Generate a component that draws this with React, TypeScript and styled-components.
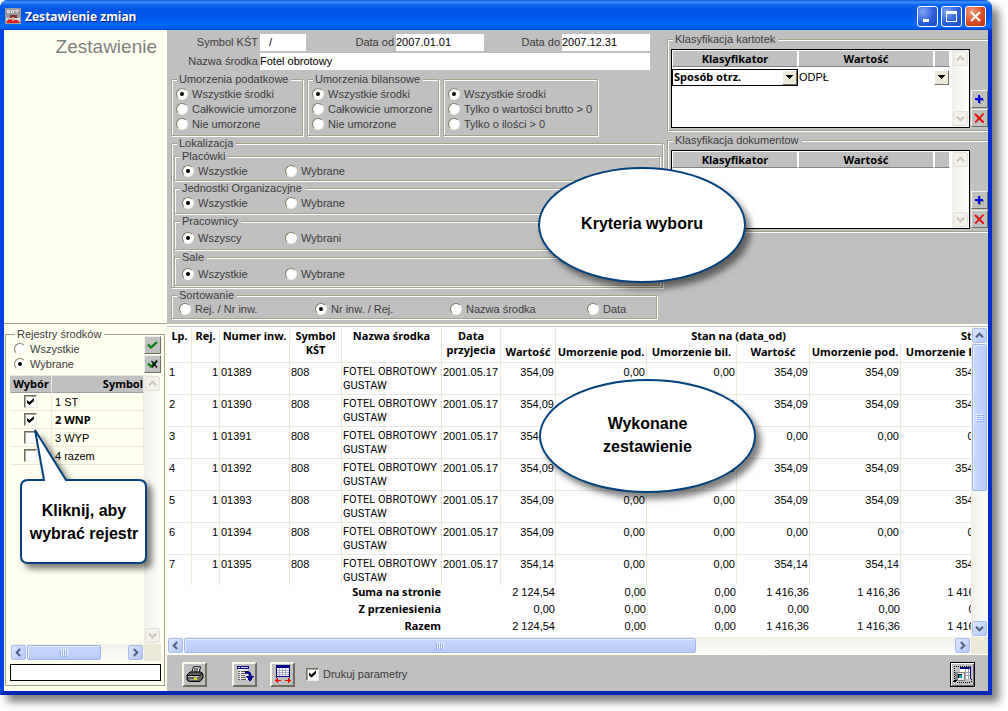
import React from "react";
import styled, { createGlobalStyle, css } from "styled-components";

const sans = '"Liberation Sans", Arial, sans-serif';
const strong = '"Noto Sans", Tahoma, sans-serif';

const face = "#c0c0c0";
const cream = "#ffffef";
const edge = "#a5a28c";
const grid = "#ece9d8";
const ink = "#3c3c3c";

const GlobalStyle = createGlobalStyle`
  *, *::before, *::after { box-sizing: border-box; }
  body { margin: 0; background: #fff; font: 11px/14px ${sans}; color: #000; overflow: hidden; }
  button, input, select { font: inherit; color: inherit; margin: 0; padding: 0; border-radius: 0; }
  fieldset { margin: 0; padding: 0; min-width: 0; }
`;

/* ---------- window frame ---------- */

const Window = styled.main`
  position: relative;
  display: flex;
  flex-direction: column;
  min-height: calc(100vh - 16px);
  margin: 0 16px 16px 0;
  border: 4px solid #0042e0;
  border-top: 0;
  border-right-color: #0030c8;
  border-bottom-color: #0026b4;
  border-radius: 8px 8px 0 0;
  box-shadow: 7px 7px 9px rgba(0, 0, 0, 0.5);
`;

const TitleBar = styled.header`
  display: flex;
  align-items: center;
  gap: 3px;
  height: 30px;
  margin: 0 -4px;
  padding: 3px 6px 0 5px;
  border-radius: 8px 8px 0 0;
  background: linear-gradient(#0a50d8 0, #3a93ff 2px, #0a62ee 5px, #0054e3 10px, #0058ee 18px, #0068ff 25px, #0060f4 28px, #003dca 30px);
`;

const Title = styled.h1`
  flex: 1;
  margin: 0;
  font: bold 12px/16px ${strong};
  color: #fff;
  text-shadow: 1px 1px 0 #0a1e82;
`;

const CaptionButton = styled.button<{ $close?: boolean }>`
  display: grid;
  place-items: center;
  width: 21px;
  height: 21px;
  border: 1px solid #fff;
  border-radius: 3px;
  background: ${(p) =>
    p.$close
      ? "radial-gradient(circle at 30% 25%, #f0a080, #e0502c 50%, #b8300c)"
      : "radial-gradient(circle at 25% 25%, #7fa4f4, #2d5fdc 55%, #1c48c0)"};
`;

const Body = styled.div`
  flex: 1;
  display: grid;
  grid-template-columns: 163px minmax(0, 1fr);
  grid-template-rows: 294px minmax(0, 1fr);
`;

const SideTop = styled.div`
  background: ${cream};
  border-bottom: 1px solid ${edge};
  padding: 6px 10px;
  text-align: right;
`;

const Heading = styled.h2`
  margin: 0;
  font: 19px/22px ${sans};
  color: #808080;
`;

const SideBottom = styled.aside`
  display: flex;
  background: ${cream};
  padding: 4px 2px 5px 1px;
`;

/* ---------- groups, radios, fields ---------- */

const Group = styled.fieldset<{ $h?: number }>`
  border: 1px solid ${edge};
  box-shadow: 1px 1px 0 #fff, inset 1px 1px 0 #fff;
  ${(p) => p.$h && css`height: ${p.$h}px;`}
`;

const SortGroup = styled(Group)`
  margin-right: 6px;
`;

const Legend = styled.legend<{ $bg?: string }>`
  margin-left: 5px;
  padding: 0 3px 0 2px;
  height: 13px;
  line-height: 13px;
  color: ${ink};
  background: ${(p) => p.$bg ?? face};
`;

const RadioLabel = styled.label<{ $w?: number }>`
  display: flex;
  align-items: center;
  gap: 4px;
  height: 15px;
  color: ${ink};
  white-space: nowrap;
  ${(p) => p.$w && css`width: ${p.$w}px;`}
`;

const RadioInput = styled.input.attrs({ type: "radio" })`
  appearance: none;
  flex: none;
  display: grid;
  place-items: center;
  width: 12px;
  height: 12px;
  border-radius: 50%;
  border: 1px solid;
  border-color: #807c68 #f4f2e6 #f4f2e6 #807c68;
  background: #fff;
  &:checked::before {
    content: "";
    width: 4px;
    height: 4px;
    border-radius: 50%;
    background: #000;
  }
`;

const CheckInput = styled.input.attrs({ type: "checkbox" })`
  appearance: none;
  flex: none;
  display: grid;
  place-items: center;
  width: 13px;
  height: 13px;
  border: 1px solid;
  border-color: #716f64 #f1efe2 #f1efe2 #716f64;
  box-shadow: inset 1px 1px 0 #aca899;
  background: #fff;
  &:checked::before {
    content: "";
    width: 7px;
    height: 7px;
    background: #000;
    clip-path: polygon(0 28%, 35% 58%, 100% 0, 100% 42%, 35% 100%, 0 70%);
  }
`;

const RadioColumn = styled.div<{ $untitled?: boolean }>`
  padding: ${(p) => (p.$untitled ? 6 : 0)}px 0 0 4px;
`;

const RadioRow = styled.div<{ $h: number }>`
  display: flex;
  align-items: center;
  padding-left: 7px;
  height: ${(p) => p.$h}px;
`;

const Criteria = styled.section`
  display: grid;
  grid-template-columns: minmax(0, 1fr) 321px;
  background: ${face};
  overflow: hidden;
`;

const CriteriaMain = styled.div`
  padding: 4px 4px 0 4px;
`;

const FieldRow = styled.div`
  display: grid;
  grid-template-columns: 89px 46px 90px 88px 78px 88px;
  height: 19px;
  align-items: start;
`;

const FieldLabel = styled.label`
  padding-right: 2px;
  text-align: right;
  line-height: 16px;
  color: ${ink};
  white-space: nowrap;
`;

const Field = styled.input<{ $wide?: boolean; $indent?: boolean }>`
  width: 100%;
  height: 17px;
  border: 0;
  padding-left: ${(p) => (p.$indent ? 9 : 0)}px;
  padding-bottom: 2px;
  background: #fff;
  ${(p) => p.$wide && css`grid-column: span 5;`}
`;

const GroupRow = styled.div`
  display: grid;
  grid-template-columns: 132px 132px 155px;
  align-items: end;
  gap: 4px;
  height: 64px;
`;

const Nested = styled.div`
  display: flex;
  flex-direction: column;
  gap: 1px;
  padding: 0 2px;
`;

const Stack = styled.div`
  display: flex;
  flex-direction: column;
  gap: 1px;
`;

/* ---------- classification grids ---------- */

const CriteriaSide = styled.div`
  display: flex;
  flex-direction: column;
  gap: 3px;
  padding-top: 3px;
`;

const ClassGroup = styled(Group)`
  border-right: 0;
  height: 98px;
`;

const ClassRow = styled.div`
  display: grid;
  grid-template-columns: minmax(0, 1fr) 17px;
  align-items: end;
  gap: 1px;
  padding: 3px 0 0 3px;
`;

const ClassBox = styled.div`
  display: flex;
  justify-content: space-between;
  height: 79px;
  border: 1px solid #000;
  background: #fff;
`;

const ClassTable = styled.table`
  width: 278px;
  height: 36px;
  table-layout: fixed;
  border-collapse: separate;
  border-spacing: 0;
  th {
    height: 17px;
    padding: 0;
    font: bold 11px/14px ${strong};
    background: ${face};
    border: 1px solid;
    border-color: #fff #fff #808080 #fff;
  }
  td {
    padding: 1px 0 0;
    height: 18px;
  }
`;

const Col = styled.col<{ $w?: number }>`
  ${(p) => p.$w && css`width: ${p.$w}px;`}
`;

const SelectWrap = styled.div<{ $framed?: boolean }>`
  display: flex;
  align-items: center;
  height: 17px;
  border: 1px solid ${(p) => (p.$framed ? "#000" : "transparent")};
  font-family: ${(p) => (p.$framed ? strong : sans)};
  font-weight: ${(p) => (p.$framed ? "bold" : "normal")};
  ${(p) => !p.$framed && css`border-left-width: 0;`}
`;

const Select = styled.select`
  appearance: none;
  flex: 1;
  min-width: 0;
  height: 15px;
  padding-left: 1px;
  border: 0;
  background: transparent;
`;

const Arrow = styled.span`
  display: grid;
  place-items: center;
  width: 15px;
  height: 15px;
  background: ${grid};
  border: 1px solid;
  border-color: #fff #716f64 #716f64 #fff;
  pointer-events: none;
`;

const SmallButtons = styled.div`
  display: flex;
  flex-direction: column;
  gap: 1px;
  padding-bottom: 1px;
`;

const SmallButton = styled.button`
  display: grid;
  place-items: center;
  width: 17px;
  height: 18px;
  background: ${face};
  border: 1px solid;
  border-color: #f4f2e6 #716f64 #716f64 #f4f2e6;
`;

/* ---------- scroll bars ---------- */

const Bar = styled.div<{ $vertical?: boolean }>`
  display: flex;
  flex-direction: ${(p) => (p.$vertical ? "column" : "row")};
  flex: none;
  gap: 1px;
  ${(p) => (p.$vertical ? "width: 17px;" : "height: 17px;")}
  padding: 1px;
  background: linear-gradient(${(p) => (p.$vertical ? "to right" : "to bottom")}, #f0efe8, #fefefb);
`;

const BarButton = styled.button<{ $off?: boolean }>`
  display: grid;
  place-items: center;
  flex: none;
  width: 15px;
  height: 15px;
  border: 1px solid ${(p) => (p.$off ? "#e4e2d6" : "#a8bdee")};
  border-radius: 2px;
  color: ${(p) => (p.$off ? "#c8c6ba" : "#4d6185")};
  background: ${(p) => (p.$off ? "#f2f1ea" : "linear-gradient(135deg, #dce6ff, #b4c8f8)")};
`;

const Thumb = styled.div<{ $grow: number; $vertical?: boolean }>`
  display: grid;
  place-items: center;
  flex: ${(p) => p.$grow} 1 0;
  border: 1px solid #9db5ea;
  border-radius: 2px;
  box-shadow: inset 1px 1px 0 #e4ecff;
  background: linear-gradient(${(p) => (p.$vertical ? "to right" : "to bottom")}, #cad9fe, #b8cbf8);
`;

const Track = styled.div<{ $grow: number }>`
  flex: ${(p) => p.$grow} 1 0;
`;

const turns = { up: 0, right: 90, down: 180, left: 270 };

function Chevron({ dir }: { dir: keyof typeof turns }) {
  return (
    <svg width="9" height="9" viewBox="0 0 9 9" aria-hidden="true">
      <path d="M1 6.2 4.5 2.7 8 6.2" fill="none" stroke="currentColor" strokeWidth="2" transform={`rotate(${turns[dir]} 4.5 4.5)`} />
    </svg>
  );
}

function Grip({ vertical }: { vertical?: boolean }) {
  return (
    <svg width="8" height="8" viewBox="0 0 8 8" shapeRendering="crispEdges" aria-hidden="true">
      <g transform={vertical ? undefined : "rotate(90 4 4)"}>
        <path d="M0 .5h7M0 2.5h7M0 4.5h7M0 6.5h7" stroke="#eef4ff" />
        <path d="M1 1.5h7M1 3.5h7M1 5.5h7M1 7.5h7" stroke="#8cb0f8" />
      </g>
    </svg>
  );
}

type ScrollProps = { vertical?: boolean; off?: boolean; thumb?: number; rest?: number };

function ScrollBar({ vertical, off, thumb = 0, rest = 1 }: ScrollProps) {
  return (
    <Bar $vertical={vertical}>
      <BarButton $off={off} disabled={off} aria-label={vertical ? "W górę" : "W lewo"}>
        <Chevron dir={vertical ? "up" : "left"} />
      </BarButton>
      {thumb > 0 && (
        <Thumb $grow={thumb} $vertical={vertical}>
          <Grip vertical={vertical} />
        </Thumb>
      )}
      <Track $grow={rest} />
      <BarButton $off={off} disabled={off} aria-label={vertical ? "W dół" : "W prawo"}>
        <Chevron dir={vertical ? "down" : "right"} />
      </BarButton>
    </Bar>
  );
}

const Corner = styled.div`
  width: 17px;
  background: ${grid};
`;

/* ---------- register list ---------- */

const RegisterGroup = styled.fieldset`
  flex: 1;
  display: flex;
  flex-direction: column;
  border: 1px solid ${edge};
  padding: 0 3px 4px 4px;
`;

const RegisterHead = styled.div`
  display: flex;
  justify-content: space-between;
  align-items: flex-start;
  height: 34px;
`;

const RegisterRadios = styled.div`
  padding-left: 4px;
`;

const HeadButtons = styled(SmallButtons)`
  margin-top: -5px;
`;

const RegisterBox = styled.div`
  flex: 1;
  display: flex;
`;

const RegisterList = styled.div`
  flex: 1;
`;

const RegisterTable = styled.table`
  width: 100%;
  table-layout: fixed;
  border-collapse: separate;
  border-spacing: 0;
  th {
    height: 18px;
    padding: 0 2px;
    font: bold 11px/14px ${strong};
    text-align: center;
    background: ${face};
    border: 1px solid;
    border-color: #e8e8e0 #e8e8e0 #a0a0a0 ${face};
  }
  th + th { text-align: right; padding-right: 0; }
  td {
    height: 18px;
    padding: 0 3px;
    border-right: 1px solid ${grid};
    border-bottom: 1px solid ${grid};
  }
`;

const Tick = styled(CheckInput)`
  margin: 0 auto;
`;

const RegisterName = styled.td<{ $bold?: boolean }>`
  ${(p) => p.$bold && css`font-family: ${strong}; font-weight: bold;`}
`;

const RegisterScroll = styled.div`
  display: grid;
  grid-template-columns: minmax(0, 1fr) 17px;
`;

const RegisterInput = styled.input`
  width: 100%;
  height: 17px;
  margin-top: 3px;
  border: 1px solid #000;
  background: #fff;
`;

/* ---------- report ---------- */

const Report = styled.section`
  display: flex;
  flex-direction: column;
  background: #fff;
  border-top: 2px solid ${cream};
  min-width: 0;
`;

const ReportBody = styled.div`
  flex: 1;
  display: flex;
  min-height: 0;
  border-top: 1px solid ${face};
`;

const Sheet = styled.div`
  flex: 1;
  min-width: 0;
  overflow: hidden;
  padding: 1px 0 0 1px;
`;

const ReportTable = styled.table`
  width: 823px;
  table-layout: fixed;
  border-collapse: separate;
  border-spacing: 0;
  white-space: nowrap;
  th, td {
    padding: 2px 1px 0;
    vertical-align: top;
    overflow: hidden;
  }
  thead th {
    font: bold 11px/14px ${strong};
    border-right: 1px solid ${grid};
  }
`;

const HeadRow = styled.tr<{ $last?: boolean }>`
  height: ${(p) => (p.$last ? 19 : 16)}px;
  th { padding: 1px 0 0; }
`;

const LineCell = styled.th`
  border-bottom: 1px solid ${grid};
`;

const SpanCell = styled.th`
  && { padding-left: 20px; border-right: 0; }
`;

const SpanCut = styled.th`
  && { padding-left: 60px; text-align: left; }
`;

const DataRow = styled.tr<{ $last?: boolean }>`
  height: ${(p) => (p.$last ? 30 : 32)}px;
  td {
    border-right: 1px solid ${grid};
    border-bottom: ${(p) => (p.$last ? 0 : 1)}px solid ${grid};
  }
`;

const Num = styled.td`
  text-align: right;
`;

const NameCell = styled.td`
  font-family: Roboto, sans-serif;
`;

const SumRow = styled.tr`
  height: 17px;
  th {
    font: bold 11px/14px ${strong};
    text-align: right;
    padding-top: 0;
  }
  td { padding-top: 0; }
`;

const ReportScroll = styled.div`
  display: grid;
  grid-template-columns: minmax(0, 1fr) 17px;
  border-bottom: 1px solid ${cream};
`;

const Footer = styled.footer`
  display: flex;
  align-items: center;
  height: 36px;
  padding: 2px 13px 0 15px;
  background: ${face};
`;

const ToolButton = styled.button<{ $after: number; $dark?: boolean }>`
  display: grid;
  place-items: center;
  width: 25px;
  height: 25px;
  margin-right: ${(p) => p.$after}px;
  background: ${face};
  border: 2px solid;
  border-color: #f8f6ec #716f64 #716f64 #f8f6ec;
  ${(p) => p.$dark && css`border: 1px solid #000; box-shadow: inset 1px 1px 0 #fff, inset -1px -1px 0 #716f64;`}
`;

const PrintLabel = styled.label`
  flex: 1;
  display: flex;
  align-items: center;
  gap: 4px;
  color: ${ink};
`;

/* ---------- callouts, floating over the window ---------- */

const Oval = styled.div<{ $x: number; $y: number; $w: number; $h: number }>`
  position: absolute;
  left: ${(p) => p.$x}px;
  top: ${(p) => p.$y}px;
  width: ${(p) => p.$w}px;
  height: ${(p) => p.$h}px;
  display: grid;
  place-items: center;
  padding-bottom: 3px;
  border: 2px solid #04427f;
  border-radius: 50%;
  background: #fff;
  box-shadow: 5px 6px 6px rgba(0, 0, 0, 0.5);
  font: bold 16px/23px ${sans};
  text-align: center;
`;

const Balloon = styled.div`
  position: absolute;
  z-index: 1;
  left: 15px;
  top: 426px;
  width: 128px;
  height: 140px;
  padding: 73px 0 0 2px;
  font: bold 16px/23px ${sans};
  text-align: center;
  white-space: nowrap;
`;

const BalloonShape = styled.svg`
  position: absolute;
  inset: 0;
  z-index: -1;
  overflow: visible;
  filter: drop-shadow(5px 5px 3px rgba(0, 0, 0, 0.5));
`;

/* ---------- icons ---------- */

const AppIcon = () => (
  <svg width="17" height="17" viewBox="0 0 17 17" aria-hidden="true">
    <path d="M0 0h16v16H0z" fill="#9c9c9c" />
    <path d="M1 10h14v5H1z" fill="#d8d8d8" />
    <path d="M2.500 2.500h2v2h-2zM6.500 5V2.500h2V5M10 2.500h4M12 2.500V5" fill="none" stroke="#e8e8e8" />
    <path d="M5 7h7v3H5z" fill="#783030" />
    <path d="M1 15c2-5 5-5 7-2 2-2 5-2 7 2z" fill="#e02018" />
    <path d="M7 9h2v3H7z" fill="#f0a090" />
  </svg>
);

const PlusIcon = () => (
  <svg width="9" height="9" viewBox="0 0 9 9" shapeRendering="crispEdges" aria-hidden="true">
    <path d="M4 1h2v3h3v2H6v3H4V6H1V4h3z" fill="#808080" />
    <path d="M3 0h2v3h3v2H5v3H3V5H0V3h3z" fill="#0000ff" />
  </svg>
);

const CrossIcon = () => (
  <svg width="11" height="11" viewBox="0 0 11 11" aria-hidden="true">
    <path d="M1.500 2.500 10 10M10 1 2 10" stroke="#808080" strokeWidth="1" />
    <path d="M1 1l8.500 8.500" stroke="#f00" strokeWidth="2" />
    <path d="M9.500 .5 1 9.500" stroke="#f00" strokeWidth="1.400" />
  </svg>
);

const TickIcon = ({ crossed }: { crossed?: boolean }) => (
  <svg width="11" height="10" viewBox="0 0 11 10" aria-hidden="true">
    <path d="M1 4.500l3 3L10 2" fill="none" stroke="#008000" strokeWidth="2.200" />
    {crossed && <path d="M4.500 2l5.500 6.500M10 1.500 5 8.500" stroke="#000" strokeWidth="1.300" />}
  </svg>
);

const TriangleIcon = () => (
  <svg width="8" height="4" viewBox="0 0 8 4" shapeRendering="crispEdges" aria-hidden="true">
    <path d="M0 0h7L3.500 4z" fill="#000" />
  </svg>
);

const PrinterIcon = () => (
  <svg width="18" height="17" viewBox="0 0 18 17" aria-hidden="true">
    <path d="M5.500 7 7.500.8h7L13 7z" fill="#fff" stroke="#000" />
    <path d="M8 3h4.500M7.500 5H12" stroke="#000" />
    <path d="M1 9l3-3h11l2 2v4l-3 3.500H3L1 14z" fill="#606060" stroke="#000" />
    <path d="M1 9.500h12.500L16.500 7" stroke="#000" fill="none" />
    <path d="M2 10.500h11" stroke="#c8c8c8" />
    <path d="M3.500 13.500h9" stroke="#a0a0a0" />
    <path d="M8 12.500h3" stroke="#f8f000" strokeWidth="2" />
  </svg>
);

const ListIcon = () => (
  <svg width="18" height="18" viewBox="0 0 18 18" shapeRendering="crispEdges" aria-hidden="true">
    <path d="M2 4h10v11H2z" fill="#e8e8e8" />
    <path d="M1 1h12v3H1z" fill="#000080" />
    <path d="M2 2.500h2M5 2.500h7" stroke="#d8d8f0" />
    <path d="M2 6.500h2M5 6.500h7M2 8.500h2M5 8.500h7M2 10.500h2M5 10.500h4M2 12.500h2M5 12.500h5M2 14.500h2M5 14.500h5" stroke="#606060" />
    <path d="M9 7.500c4-1 6 1 5 5.500" fill="none" stroke="#000080" strokeWidth="2.600" shapeRendering="auto" />
    <path d="M10 11h8l-4 6z" fill="#000080" />
  </svg>
);

const WidthIcon = () => (
  <svg width="18" height="18" viewBox="0 0 18 18" shapeRendering="crispEdges" aria-hidden="true">
    <path d="M2 3h13v8H2z" fill="#fff" />
    <path d="M2 5.500h13M2 7.500h13M2 9.500h13M5.500 3v8M8.500 3v8M11.500 3v8" stroke="#a8a8c0" />
    <path d="M2 0h14v3H2z" fill="#000080" />
    <path d="M2.500 2v11M15.500 2v11M2 11.500h14" stroke="#000080" />
    <path d="M1 15.500h6M11 15.500h6M3.500 13v5M14.500 13v5M2.500 14v3M15.500 14v3" stroke="#ff0000" />
  </svg>
);

const PreviewIcon = () => (
  <svg width="19" height="19" viewBox="0 0 19 19" shapeRendering="crispEdges" aria-hidden="true">
    <path d="M7 3h11v11H7z" fill="#fff" />
    <path d="M7 1h11v3H7z" fill="#000080" />
    <path d="M8 1.500h10" stroke="#f0e000" strokeDasharray="1 1" />
    <path d="M7 7.500h11M7 10.500h11M12.500 4v10M15.500 4v10" stroke="#a0a0c0" />
    <path d="M17.500 3v11" stroke="#000080" />
    <path d="M1 1.500h6M1.500 1v13M4 17.500h14M18.500 14v4" stroke="#000" strokeDasharray="1 1" />
    <path d="M2 7h3v8H2z" fill="#808080" />
    <path d="M4 7h7v8H4z" fill="#f0f0f0" stroke="#808080" />
    <path d="M5 9h4v4H5z" fill="#000" />
    <path d="M6 10h3v3H6z" fill="#00a8a8" />
    <path d="M1 15.500h3M0 16.500h3" stroke="#000" />
  </svg>
);

/* ---------- assembled parts ---------- */

type RadioProps = { group: string; text: string; on?: boolean; width?: number };

function Radio({ group, text, on, width }: RadioProps) {
  return (
    <RadioLabel $w={width}>
      <RadioInput name={group} defaultChecked={on} />
      {text}
    </RadioLabel>
  );
}

const locations = [
  { name: "Placówki", all: "Wszystkie", some: "Wybrane", height: 31, row: 15 },
  { name: "Jednostki Organizacyjne", all: "Wszystkie", some: "Wybrane", height: 32, row: 15 },
  { name: "Pracownicy", all: "Wszyscy", some: "Wybrani", height: 35, row: 20 },
  { name: "Sale", all: "Wszystkie", some: "Wybrane", height: 35, row: 20 },
];

function Classification({ title, filled }: { title: string; filled?: boolean }) {
  return (
    <ClassGroup>
      <Legend>{title}</Legend>
      <ClassRow>
        <ClassBox>
          <div>
            <ClassTable>
              <colgroup>
                <Col $w={126} />
                <Col $w={136} />
                <Col />
              </colgroup>
              <thead>
                <tr>
                  <th>Klasyfikator</th>
                  <th>Wartość</th>
                  <th aria-label="Lista" />
                </tr>
              </thead>
              <tbody>
                <tr>
                  {filled && (
                    <>
                      <td>
                        <SelectWrap $framed>
                          <Select aria-label="Klasyfikator">
                            <option>Sposób otrz.</option>
                          </Select>
                          <Arrow><TriangleIcon /></Arrow>
                        </SelectWrap>
                      </td>
                      <td colSpan={2}>
                        <SelectWrap>
                          <Select aria-label="Wartość">
                            <option>ODPŁ</option>
                          </Select>
                          <Arrow><TriangleIcon /></Arrow>
                        </SelectWrap>
                      </td>
                    </>
                  )}
                </tr>
              </tbody>
            </ClassTable>
          </div>
          <ScrollBar vertical off />
        </ClassBox>
        <SmallButtons>
          <SmallButton aria-label="Dodaj"><PlusIcon /></SmallButton>
          <SmallButton aria-label="Usuń"><CrossIcon /></SmallButton>
        </SmallButtons>
      </ClassRow>
    </ClassGroup>
  );
}

const registers = [
  { name: "1 ST", on: true },
  { name: "2 WNP", on: true, bold: true },
  { name: "3 WYP" },
  { name: "4 razem" },
];

const widths = [24, 28, 70, 52, 100, 59, 55, 91, 90, 73, 91, 90];

const v = "354,09";
const z = "0,00";
const rows = [
  { inv: "01389", values: [v, z, z, v, v, v] },
  { inv: "01390", values: [v, z, z, v, v, v] },
  { inv: "01391", values: [v, z, z, z, z, z] },
  { inv: "01392", values: [v, z, z, v, v, v] },
  { inv: "01393", values: [v, z, z, v, v, v] },
  { inv: "01394", values: [v, z, z, z, z, z] },
  { inv: "01395", values: ["354,14", z, z, "354,14", "354,14", "354,14"] },
];

const total = ["2 124,54", z, z, "1 416,36", "1 416,36", "1 416,36"];
const sums = [
  { name: "Suma na stronie", values: total },
  { name: "Z przeniesienia", values: [z, z, z, z, z, z] },
  { name: "Razem", values: total },
];

export default function App() {
  return (
    <>
      <GlobalStyle />
      <Window>
        <TitleBar>
          <AppIcon />
          <Title>Zestawienie zmian</Title>
          <CaptionButton aria-label="Minimalizuj">
            <svg width="13" height="13"><path d="M2 9h6v3H2z" fill="#fff" /></svg>
          </CaptionButton>
          <CaptionButton aria-label="Maksymalizuj">
            <svg width="13" height="13" shapeRendering="crispEdges">
              <path d="M1.500 2v9.500h10V2" fill="none" stroke="#fff" />
              <path d="M1 1h11v3H1z" fill="#fff" />
            </svg>
          </CaptionButton>
          <CaptionButton $close aria-label="Zamknij">
            <svg width="13" height="13"><path d="M2 2l9 9M11 2l-9 9" stroke="#fff" strokeWidth="2" /></svg>
          </CaptionButton>
        </TitleBar>

        <Body>
          <SideTop>
            <Heading>Zestawienie</Heading>
          </SideTop>

          <Criteria>
            <CriteriaMain>
              <FieldRow>
                <FieldLabel htmlFor="kst">Symbol KŚT</FieldLabel>
                <Field id="kst" defaultValue="/" $indent />
                <FieldLabel htmlFor="from">Data od</FieldLabel>
                <Field id="from" defaultValue="2007.01.01" />
                <FieldLabel htmlFor="to">Data do</FieldLabel>
                <Field id="to" defaultValue="2007.12.31" />
              </FieldRow>
              <FieldRow>
                <FieldLabel htmlFor="name">Nazwa środka</FieldLabel>
                <Field id="name" defaultValue="Fotel obrotowy" $wide />
              </FieldRow>
              <Stack>
                <GroupRow>
                  <Group $h={63}>
                    <Legend>Umorzenia podatkowe</Legend>
                    <RadioColumn>
                      <Radio group="tax" text="Wszystkie środki" on />
                      <Radio group="tax" text="Całkowicie umorzone" />
                      <Radio group="tax" text="Nie umorzone" />
                    </RadioColumn>
                  </Group>
                  <Group $h={63}>
                    <Legend>Umorzenia bilansowe</Legend>
                    <RadioColumn>
                      <Radio group="balance" text="Wszystkie środki" on />
                      <Radio group="balance" text="Całkowicie umorzone" />
                      <Radio group="balance" text="Nie umorzone" />
                    </RadioColumn>
                  </Group>
                  <Group $h={57} aria-label="Zakres środków">
                    <RadioColumn $untitled>
                      <Radio group="range" text="Wszystkie środki" on />
                      <Radio group="range" text="Tylko o wartości brutto > 0" />
                      <Radio group="range" text="Tylko o ilości > 0" />
                    </RadioColumn>
                  </Group>
                </GroupRow>
                <Group $h={151}>
                  <Legend>Lokalizacja</Legend>
                  <Nested>
                    {locations.map((l) => (
                      <Group key={l.name} $h={l.height}>
                        <Legend>{l.name}</Legend>
                        <RadioRow $h={l.row}>
                          <Radio group={l.name} text={l.all} width={103} on />
                          <Radio group={l.name} text={l.some} />
                        </RadioRow>
                      </Group>
                    ))}
                  </Nested>
                </Group>
                <SortGroup $h={30}>
                  <Legend>Sortowanie</Legend>
                  <RadioRow $h={13}>
                    <Radio group="sort" text="Rej. / Nr inw." width={136} />
                    <Radio group="sort" text="Nr inw. / Rej." width={135} on />
                    <Radio group="sort" text="Nazwa środka" width={137} />
                    <Radio group="sort" text="Data" />
                  </RadioRow>
                </SortGroup>
              </Stack>
            </CriteriaMain>

            <CriteriaSide>
              <Classification title="Klasyfikacja kartotek" filled />
              <Classification title="Klasyfikacja dokumentow" />
            </CriteriaSide>
          </Criteria>

          <SideBottom>
            <RegisterGroup>
              <Legend $bg={cream}>Rejestry środków</Legend>
              <RegisterHead>
                <RegisterRadios>
                  <Radio group="register" text="Wszystkie" />
                  <Radio group="register" text="Wybrane" on />
                </RegisterRadios>
                <HeadButtons>
                  <SmallButton aria-label="Zaznacz wszystkie"><TickIcon /></SmallButton>
                  <SmallButton aria-label="Odznacz wszystkie"><TickIcon crossed /></SmallButton>
                </HeadButtons>
              </RegisterHead>
              <RegisterBox>
                <RegisterList>
                  <RegisterTable>
                    <colgroup>
                      <Col $w={42} />
                      <Col />
                    </colgroup>
                    <thead>
                      <tr>
                        <th>Wybór</th>
                        <th>Symbol</th>
                      </tr>
                    </thead>
                    <tbody>
                      {registers.map((r) => (
                        <tr key={r.name}>
                          <td><Tick defaultChecked={r.on} aria-label={r.name} /></td>
                          <RegisterName $bold={r.bold}>{r.name}</RegisterName>
                        </tr>
                      ))}
                    </tbody>
                  </RegisterTable>
                </RegisterList>
                <ScrollBar vertical off />
              </RegisterBox>
              <RegisterScroll>
                <ScrollBar thumb={73} rest={26} />
                <Corner />
              </RegisterScroll>
              <RegisterInput aria-label="Szukaj rejestru" />
            </RegisterGroup>
          </SideBottom>

          <Report>
            <ReportBody>
              <Sheet>
                <ReportTable>
                  <colgroup>
                    {widths.map((w, i) => (
                      <Col key={i} $w={w} />
                    ))}
                  </colgroup>
                  <thead>
                    <HeadRow>
                      <LineCell rowSpan={2}>Lp.</LineCell>
                      <LineCell rowSpan={2}>Rej.</LineCell>
                      <LineCell rowSpan={2}>Numer inw.</LineCell>
                      <LineCell rowSpan={2}>Symbol<br />KŚT</LineCell>
                      <LineCell rowSpan={2}>Nazwa środka</LineCell>
                      <LineCell rowSpan={2}>Data<br />przyjecia</LineCell>
                      <th />
                      <SpanCell colSpan={4}>Stan na (data_od)</SpanCell>
                      <SpanCut>Stan</SpanCut>
                    </HeadRow>
                    <HeadRow $last>
                      <LineCell>Wartość</LineCell>
                      <LineCell>Umorzenie pod.</LineCell>
                      <LineCell>Umorzenie bil.</LineCell>
                      <LineCell>Wartość</LineCell>
                      <LineCell>Umorzenie pod.</LineCell>
                      <LineCell>Umorzenie bil.</LineCell>
                    </HeadRow>
                  </thead>
                  <tbody>
                    {rows.map((r, i) => (
                      <DataRow key={r.inv} $last={i === rows.length - 1}>
                        <td>{i + 1}</td>
                        <Num>1</Num>
                        <td>{r.inv}</td>
                        <td>808</td>
                        <NameCell>FOTEL OBROTOWY<br />GUSTAW</NameCell>
                        <td>2001.05.17</td>
                        {r.values.map((value, n) => (
                          <Num key={n}>{value}</Num>
                        ))}
                      </DataRow>
                    ))}
                  </tbody>
                  <tfoot>
                    {sums.map((s) => (
                      <SumRow key={s.name}>
                        <th colSpan={5}>{s.name}</th>
                        <td />
                        {s.values.map((value, n) => (
                          <Num key={n}>{value}</Num>
                        ))}
                      </SumRow>
                    ))}
                  </tfoot>
                </ReportTable>
              </Sheet>
              <ScrollBar vertical thumb={147} rest={129} />
            </ReportBody>
            <ReportScroll>
              <ScrollBar thumb={509} rest={257} />
              <Corner />
            </ReportScroll>
            <Footer>
              <ToolButton $after={25} aria-label="Drukuj"><PrinterIcon /></ToolButton>
              <ToolButton $after={13} aria-label="Kolumny"><ListIcon /></ToolButton>
              <ToolButton $after={11} aria-label="Szerokość kolumn"><WidthIcon /></ToolButton>
              <PrintLabel>
                <CheckInput defaultChecked />
                Drukuj parametry
              </PrintLabel>
              <ToolButton $after={0} $dark aria-label="Podgląd"><PreviewIcon /></ToolButton>
            </Footer>
          </Report>
        </Body>

        <Oval $x={534} $y={167} $w={208} $h={116}>Kryteria wyboru</Oval>
        <Oval $x={535} $y={379} $w={217} $h={114}>
          <span>Wykonane<br />zestawienie</span>
        </Oval>
        <Balloon>
          <BalloonShape width="128" height="140" viewBox="0 0 128 140" aria-hidden="true">
            <path
              d="M9 54h16L16 4l31 50h73q7 0 7 7v69q0 7-7 7H9q-7 0-7-7V61q0-7 7-7z"
              fill="#fff"
              stroke="#04427f"
              strokeWidth="2"
            />
          </BalloonShape>
          Kliknij, aby<br />wybrać rejestr
        </Balloon>
      </Window>
    </>
  );
}
